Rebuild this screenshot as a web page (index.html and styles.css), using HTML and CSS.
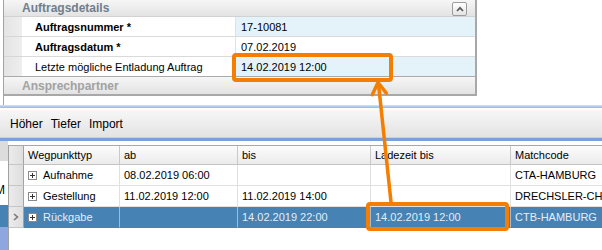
FILE: index.html
```html
<!DOCTYPE html>
<html lang="de">
<head>
  <meta charset="UTF-8">
  <meta name="viewport" content="width=device-width, initial-scale=1.0">
  <title>Auftrag – Wegpunkte</title>
  <link rel="stylesheet" href="styles.css">
</head>
<body>
  <div class="screen">

    <!-- Auftragsdetails -->
    <div class="details">
      <div class="group-head">
        <span>Auftragsdetails</span>
        <button class="collapse" title="Einklappen">
          <svg width="8" height="6" viewBox="0 0 8 6"><path d="M1 5 L4 1.8 L7 5" fill="none" stroke="#5a5a5a" stroke-width="1.7"/></svg>
        </button>
      </div>
      <div class="field">
        <div class="indent"></div>
        <div class="label required">Auftragsnummer *</div>
        <div class="value tint">17-10081</div>
      </div>
      <div class="field">
        <div class="indent"></div>
        <div class="label required">Auftragsdatum *</div>
        <div class="value">07.02.2019</div>
      </div>
      <div class="field last">
        <div class="indent"></div>
        <div class="label">Letzte mögliche Entladung Auftrag</div>
        <div class="value tint">14.02.2019 12:00</div>
      </div>
      <div class="group-head muted">
        <span>Ansprechpartner</span>
      </div>
    </div>
    <div class="details-foot"></div>

    <div class="splitter"></div>

    <!-- Wegpunkte -->
    <div class="toolbar">
      <span>Höher</span>
      <span>Tiefer</span>
      <span>Import</span>
    </div>
    <div class="band"></div>

    <div class="lower">
      <div class="behind">
        <div class="b-top"></div>
        <div class="b-text">M</div>
        <div class="b-sel"></div>
        <div class="b-rest"></div>
      </div>

      <div class="grid">
        <div class="cell rh hd"></div>
        <div class="cell hd">Wegpunkttyp</div>
        <div class="cell hd">ab</div>
        <div class="cell hd">bis</div>
        <div class="cell hd">Ladezeit bis</div>
        <div class="cell hd">Matchcode</div>

        <div class="cell rh"></div>
        <div class="cell"><span class="expand"></span>Aufnahme</div>
        <div class="cell">08.02.2019 06:00</div>
        <div class="cell"></div>
        <div class="cell"></div>
        <div class="cell">CTA-HAMBURG</div>

        <div class="cell rh"></div>
        <div class="cell"><span class="expand"></span>Gestellung</div>
        <div class="cell">11.02.2019 12:00</div>
        <div class="cell">11.02.2019 14:00</div>
        <div class="cell"></div>
        <div class="cell">DRECHSLER-CHEMIE</div>

        <div class="cell rh current">
          <svg width="6" height="8" viewBox="0 0 6 8"><path d="M1 1 L4.5 4 L1 7" fill="none" stroke="#7a7a7a" stroke-width="1.6"/></svg>
        </div>
        <div class="cell sel"><span class="expand"></span>Rückgabe</div>
        <div class="cell sel"></div>
        <div class="cell sel">14.02.2019 22:00</div>
        <div class="cell sel">14.02.2019 12:00</div>
        <div class="cell sel">CTB-HAMBURG</div>
      </div>
    </div>

    <!-- Markierungen -->
    <div class="callout callout-top"></div>
    <div class="callout callout-bottom"></div>
    <svg class="arrow" width="602" height="250" viewBox="0 0 602 250">
      <path d="M378.6 85 L391 202" stroke="#f57d00" stroke-width="3.5" fill="none" stroke-linecap="round"/>
      <path d="M372.3 94.7 L378 82.5 L386.3 93.1" stroke="#f57d00" stroke-width="3.5" fill="none" stroke-linecap="round" stroke-linejoin="round"/>
    </svg>
  </div>
</body>
</html>
```

FILE: styles.css
```css
* {
  box-sizing: border-box;
}

body {
  margin: 0;
  font-family: "Liberation Sans", Arial, sans-serif;
  font-size: 11px;
  color: #000;
  background: #fff;
}

.screen {
  position: relative;
  width: 602px;
  height: 250px;
  overflow: hidden;
}

/* Auftragsdetails */
.details {
  margin-left: 3px;
  width: 474px;
  border-left: 1px solid #a3a3a3;
  border-right: 2px solid #a8a8a8;
  border-bottom: 2px solid #a8a8a8;
}

.group-head {
  height: 17px;
  display: flex;
  align-items: center;
  justify-content: space-between;
  padding: 0 8px 0 18px;
  background: linear-gradient(#f6f6f6, #e3e3e3);
  border-bottom: 1px solid #d2d2d2;
  font-size: 12px;
  font-weight: bold;
  color: #6f7e8d;
}

.group-head.muted {
  height: 17px;
  color: #a2a2a2;
  border-bottom: none;
}

.collapse {
  width: 15px;
  height: 14px;
  margin-top: 1px;
  padding: 0;
  display: flex;
  align-items: center;
  justify-content: center;
  border: 1px solid #9c9c9c;
  border-radius: 2px;
  background: linear-gradient(#ffffff, #e4e4e4);
}

.field {
  display: grid;
  grid-template-columns: 18px 213px 1fr;
  height: 20px;
}

.indent {
  background: linear-gradient(90deg, #e4e4e4, #eeeeee);
  border-bottom: 1px solid #d6d6d6;
}

.label,
.value {
  display: flex;
  align-items: center;
  white-space: nowrap;
  border-bottom: 1px solid #dadada;
}

.label {
  padding-left: 13px;
}

.label.required {
  font-weight: bold;
}

.value {
  padding-left: 5px;
  border-left: 1px solid #dde2e5;
}

.value.tint {
  background: #e4f3fa;
}

.field.last > div {
  border-bottom-color: #aaaaaa;
}

.details-foot {
  height: 9px;
  margin-left: 3px;
  border-left: 1px solid #a3a3a3;
}

.splitter {
  height: 3px;
  margin-bottom: 2px;
  background: linear-gradient(#d2e4f9, #90b6ea);
}

/* Wegpunkte */
.toolbar {
  height: 28px;
  display: flex;
  align-items: center;
  gap: 8px;
  padding-left: 10px;
  background: linear-gradient(#f7f7f7, #e3e3e3);
  border-bottom: 1px solid #cfcfcf;
  font-size: 12px;
}

.band {
  height: 3px;
  background: #7f9edf;
}

.lower {
  display: flex;
  height: 109px;
}

.behind {
  flex: none;
  width: 8px;
  display: flex;
  flex-direction: column;
  overflow: hidden;
}

.b-top {
  height: 20px;
  background: #dcdcdc;
}

.b-text {
  height: 44px;
  padding-top: 22px;
  background: #fff;
  text-indent: -5px;
  font-size: 12px;
}

.b-sel {
  height: 22px;
  background: #4682b4;
}

.b-rest {
  flex: 1;
  background: #8fa7e0;
}

.grid {
  flex: none;
  display: grid;
  grid-template-columns: 15px 96px 118px 133px 140px 120px;
  grid-template-rows: 19px repeat(3, 21px);
  align-content: start;
  margin-top: 4px;
  border-top: 1px solid #a8a8a8;
  border-left: 1px solid #a0a0a0;
}

.cell {
  display: flex;
  align-items: center;
  padding-left: 4px;
  white-space: nowrap;
  overflow: hidden;
  border-right: 1px solid #e0e0e0;
  border-bottom: 1px solid #e0e0e0;
}

.cell.hd {
  background: linear-gradient(#fcfcfc, #ebebeb);
  border-right-color: #c9c9c9;
  border-bottom-color: #c2c2c2;
}

.cell.rh {
  padding: 0;
  justify-content: center;
  background: linear-gradient(90deg, #ebebeb, #dedede);
  border-right-color: #a3a3a3;
  border-bottom-color: #c6c6c6;
}

.cell.sel {
  background: #4682b4;
  color: #e4edf7;
  border-right-color: #9cbcd9;
  border-bottom-color: #4682b4;
}

.expand {
  flex: none;
  width: 9px;
  height: 9px;
  margin: 0 6px 0 0;
  border: 1px solid #8a8a8a;
  background:
    linear-gradient(#333, #333) center / 5px 1px no-repeat,
    linear-gradient(#333, #333) center / 1px 5px no-repeat,
    #fff;
}

/* Markierungen */
.callout {
  position: absolute;
  border: 4px solid #f57d00;
  border-radius: 4px;
}

.callout-top {
  left: 232px;
  top: 53px;
  width: 161px;
  height: 29px;
}

.callout-bottom {
  left: 366px;
  top: 202px;
  width: 143px;
  height: 29px;
}

.arrow {
  position: absolute;
  left: 0;
  top: 0;
  pointer-events: none;
}
```
